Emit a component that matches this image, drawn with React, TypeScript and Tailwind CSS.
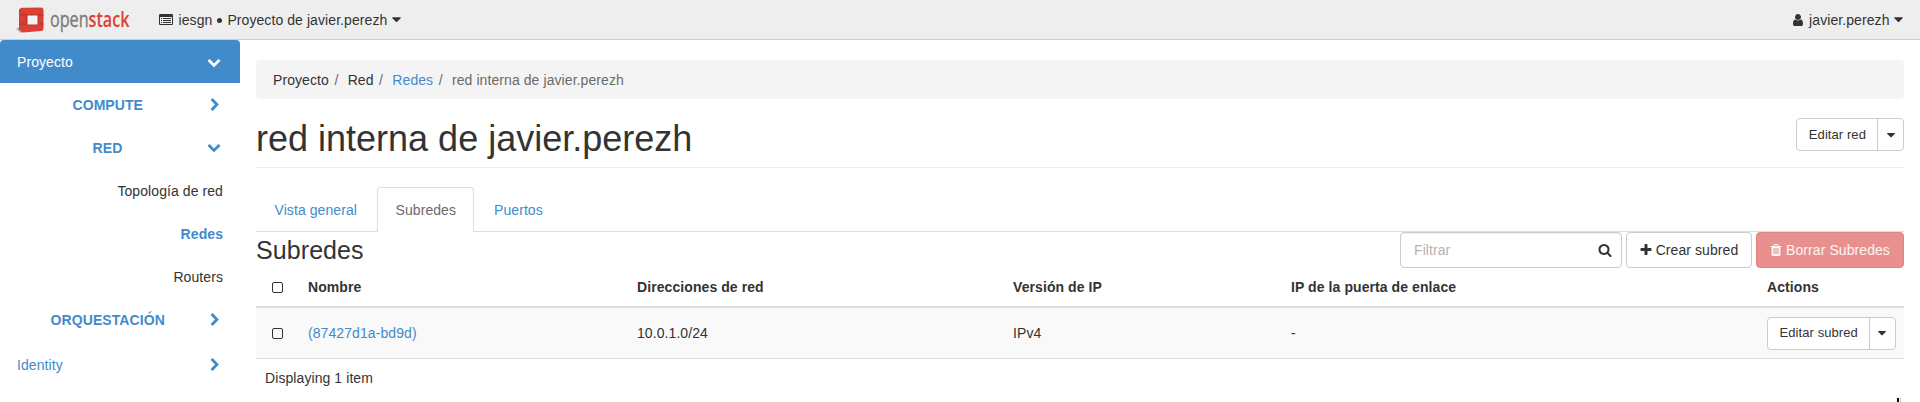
import React from "react";

const ICONS = {
  chevronDown:
    "M1683 808l-742 741q-19 19-45 19t-45-19l-742-741q-19-19-19-45.5t19-45.5l166-165q19-19 45-19t45 19l531 531 531-531q19-19 45-19t45 19l166 165q19 19 19 45.5t-19 45.5z",
  chevronRight:
    "M1363 877l-742 742q-19 19-45 19t-45-19l-166-166q-19-19-19-45t19-45l531-531-531-531q-19-19-19-45t19-45l166-166q19-19 45-19t45 19l742 742q19 19 19 45t-19 45z",
  listAlt:
    "M384 1184v64q0 13-9.5 22.5t-22.5 9.5h-64q-13 0-22.5-9.5t-9.5-22.5v-64q0-13 9.5-22.5t22.5-9.5h64q13 0 22.5 9.5t9.5 22.5zm0-256v64q0 13-9.5 22.5t-22.5 9.5h-64q-13 0-22.5-9.5t-9.5-22.5v-64q0-13 9.5-22.5t22.5-9.5h64q13 0 22.5 9.5t9.5 22.5zm0-256v64q0 13-9.5 22.5t-22.5 9.5h-64q-13 0-22.5-9.5t-9.5-22.5v-64q0-13 9.5-22.5t22.5-9.5h64q13 0 22.5 9.5t9.5 22.5zm1152 512v64q0 13-9.5 22.5t-22.5 9.5h-960q-13 0-22.5-9.5t-9.5-22.5v-64q0-13 9.5-22.5t22.5-9.5h960q13 0 22.5 9.5t9.5 22.5zm0-256v64q0 13-9.5 22.5t-22.5 9.5h-960q-13 0-22.5-9.5t-9.5-22.5v-64q0-13 9.5-22.5t22.5-9.5h960q13 0 22.5 9.5t9.5 22.5zm0-256v64q0 13-9.5 22.5t-22.5 9.5h-960q-13 0-22.5-9.5t-9.5-22.5v-64q0-13 9.5-22.5t22.5-9.5h960q13 0 22.5 9.5t9.5 22.5zm128 704v-832q0-13-9.5-22.5t-22.5-9.5h-1472q-13 0-22.5 9.5t-9.5 22.5v832q0 13 9.5 22.5t22.5 9.5h1472q13 0 22.5-9.5t9.5-22.5zm128-1088v1088q0 66-47 113t-113 47h-1472q-66 0-113-47t-47-113v-1088q0-66 47-113t113-47h1472q66 0 113 47t47 113z",
  caret:
    "M1408 704q0 26-19 45l-448 448q-19 19-45 19t-45-19l-448-448q-19-19-19-45t19-45 45-19h896q26 0 45 19t19 45z",
  user:
    "M1536 1399q0 109-62.5 187t-150.5 78h-854q-88 0-150.5-78t-62.5-187q0-85 8.5-160.5t31.5-152 58.5-131 94-89 134.5-34.5q131 128 313 128t313-128q76 0 134.5 34.5t94 89 58.5 131 31.5 152 8.500 160.5zm-256-887q0 159-112.5 271.5t-271.5 112.5-271.5-112.5-112.5-271.5 112.5-271.5 271.5-112.5 271.5 112.5 112.5 271.5z",
  search:
    "M1216 832q0-185-131.5-316.5t-316.5-131.5-316.5 131.5-131.5 316.5 131.5 316.5 316.5 131.5 316.5-131.5 131.5-316.5zm512 832q0 52-38 90t-90 38q-54 0-90-38l-343-342q-179 124-399 124-143 0-273.5-55.5t-225-150-150-225-55.5-273.5 55.5-273.5 150-225 225-150 273.5-55.5 273.5 55.5 225 150 150 225 55.5 273.5q0 220-124 399l343 343q37 37 37 90z",
  plus:
    "M1600 736v192q0 40-28 68t-68 28h-416v416q0 40-28 68t-68 28h-192q-40 0-68-28t-28-68v-416h-416q-40 0-68-28t-28-68v-192q0-40 28-68t68-28h416v-416q0-40 28-68t68-28h192q40 0 68 28t28 68v416h416q40 0 68 28t28 68z",
  trash:
    "M704 1376v-704q0-14-9-23t-23-9h-64q-14 0-23 9t-9 23v704q0 14 9 23t23 9h64q14 0 23-9t9-23zm256 0v-704q0-14-9-23t-23-9h-64q-14 0-23 9t-9 23v704q0 14 9 23t23 9h64q14 0 23-9t9-23zm256 0v-704q0-14-9-23t-23-9h-64q-14 0-23 9t-9 23v704q0 14 9 23t23 9h64q14 0 23-9t9-23zm-544-992h448l-48-117q-7-9-17-11h-317q-10 2-17 11zm928 32v64q0 14-9 23t-23 9h-96v948q0 83-47 143.5t-113 60.5h-832q-66 0-113-58.5t-47-141.5v-952h-96q-14 0-23-9t-9-23v-64q0-14 9-23t23-9h309l70-167q15-37 54-63t79-26h320q40 0 79 26t54 63l70 167h309q14 0 23 9t9 23z",
};

function Icon({ name, className = "size-[14px]" }: { name: keyof typeof ICONS; className?: string }) {
  return (
    <svg viewBox="0 0 1792 1792" fill="currentColor" className={`shrink-0 ${className}`} aria-hidden="true">
      <path d={ICONS[name]} />
    </svg>
  );
}

function Logo() {
  return (
    <svg width="116" height="30" viewBox="0 0 116 30" className="shrink-0 overflow-visible">
      <path d="M0 24l5 4 3-2-5-4z" fill="#b9b4b4" />
      <path d="M3 4.500l3-2v25l-3-3z" fill="#c4453d" />
      <path d="M4.500 4Q5 2.800 7 2.700L25 2.500q2.500 0 2.500 2.500V23.500q0 2.500-2.500 2.600L7.500 27.500Q5.500 27.500 5 25.500z" fill="#dc4034" />
      <path d="M4.500 10h7M4.500 19h7M21 10h6.500M21 19h6.500" stroke="#b0322a" strokeWidth="1" />
      <path d="M10 9.500h12.500v11h-12.500z" fill="#bd362c" />
      <path d="M11.500 10.500h10V19.500h-10z" fill="#f3f3f3" />
      <text x="34" y="21.500" fontFamily="Open Sans" fontSize="21" letterSpacing="0" textLength="79.500" lengthAdjust="spacingAndGlyphs">
        <tspan fill="#7d7d7d" stroke="#7d7d7d" strokeWidth="0.400">open</tspan>
        <tspan fill="#dd4035" fontWeight="600">stack</tspan>
      </text>
    </svg>
  );
}

function GroupItem({ label, open = false }: { label: string; open?: boolean }) {
  return (
    <a className="flex h-[43px] items-center gap-2 pl-[16px] pr-[19px] font-bold text-[#428bca]">
      <span className="flex-1 text-center">{label}</span>
      <Icon name={open ? "chevronDown" : "chevronRight"} className={open ? "mb-[1px] size-[14px]" : "-mr-[0.5px] size-[14px]"} />
    </a>
  );
}

function Sidebar() {
  return (
    <nav className="w-[240px] shrink-0">
      <a className="flex h-[43px] items-center justify-between rounded-t bg-[#428bca] pl-[17px] pr-[19.5px] text-white">
        <span>Proyecto</span>
        <Icon name="chevronDown" />
      </a>
      <GroupItem label="COMPUTE" />
      <GroupItem label="RED" open />
      <a className="flex h-[43px] items-center justify-end pr-[17px]">Topología de red</a>
      <a className="flex h-[43px] items-center justify-end pr-[17px] font-bold text-[#428bca]">Redes</a>
      <a className="flex h-[43px] items-center justify-end pr-[17px]">Routers</a>
      <GroupItem label="ORQUESTACIÓN" />
      <a className="mt-[2px] flex h-[43px] items-center justify-between pl-[17px] pr-[18.5px] text-[#428bca]">
        <span>Identity</span>
        <Icon name="chevronRight" />
      </a>
    </nav>
  );
}

function SplitButton({ label }: { label: string }) {
  return (
    <div className="inline-flex h-[33px] rounded border border-[#ccc] bg-white text-[13px]">
      <button className="border-r border-[#ccc] pl-[11.5px] pr-[11px]">{label}</button>
      <button className="flex w-[25px] items-center justify-center">
        <Icon name="caret" />
      </button>
    </div>
  );
}

const GRID = "grid grid-cols-[44px_329px_376px_278px_476px_145px] items-center";

export default function App() {
  return (
    <div className="relative h-[402px] w-[1920px] overflow-hidden bg-white font-['Liberation_Sans',Arial,sans-serif] text-[14px] leading-[20px] tracking-[0.08px] text-[#333]">
      <header className="flex h-[40px] items-center border-b border-[#ccc] bg-[#eee] pl-[16px] pr-[14px]">
        <Logo />
        <div className="ml-[26.5px] flex items-center">
          <Icon name="listAlt" />
          <span className="ml-[6px]">iesgn</span>
          <span className="ml-[5px] mr-[5px] mt-[2px] size-[5px] rounded-full bg-[#333]" />
          <span>Proyecto de javier.perezh</span>
          <Icon name="caret" className="ml-[2px] size-[15px]" />
        </div>
        <div className="ml-auto flex items-center">
          <Icon name="user" />
          <span className="ml-[4px]">javier.perezh</span>
          <Icon name="caret" className="ml-[1.5px] size-[15px]" />
        </div>
      </header>

      <div className="flex">
        <Sidebar />
        <main className="flex-1 pl-[16px] pr-[16px] pt-[20px]">
          <ol className="flex h-[39px] items-center rounded bg-[#f4f4f4] pl-[17px] pt-[1px]">
            <li>Proyecto</li>
            <li className="whitespace-pre pl-[5.5px] pr-[5.3px] text-[#6b6b6b]">/ </li>
            <li>Red</li>
            <li className="whitespace-pre pl-[5.5px] pr-[5.3px] text-[#6b6b6b]">/ </li>
            <li className="text-[#428bca]">Redes</li>
            <li className="whitespace-pre pl-[5.5px] pr-[5.3px] text-[#6b6b6b]">/ </li>
            <li className="text-[#6b6b6b]">red interna de javier.perezh</li>
          </ol>

          <div className="flex h-[69px] items-start justify-between border-b border-[#eee] pt-[19px]">
            <h1 className="pt-[1px] text-[36px] leading-[40px] tracking-normal">red interna de javier.perezh</h1>
            <SplitButton label="Editar red" />
          </div>

          <div className="mt-[19px] flex h-[45px] border-b border-[#ddd]">
            <a className="mr-[2px] flex h-[45px] w-[119px] items-center border border-transparent pl-[17.5px] text-[#428bca]">Vista general</a>
            <a className="mr-[2px] flex h-[45px] w-[97px] items-center rounded-t border border-b-0 border-[#ddd] bg-white pl-[17.5px] text-[#6b6b6b]">Subredes</a>
            <a className="flex h-[45px] items-center border border-transparent px-[17px] text-[#428bca]">Puertos</a>
          </div>

          <div className="flex h-[36px] justify-between">
            <h3 className="pt-[5px] text-[25px] leading-[26px]">Subredes</h3>
            <div className="flex gap-[4px]">
              <div className="flex h-[36px] w-[222px] items-center justify-between rounded border border-[#ccc] bg-white pl-[13px] pr-[9.5px] shadow-[inset_0_1px_1px_rgba(0,0,0,0.075)]">
                <span className="text-[#b3b3b3]">Filtrar</span>
                <Icon name="search" />
              </div>
              <button className="flex h-[36px] w-[126px] items-center justify-center gap-[3px] rounded border border-[#ccc] bg-white pr-[1px]">
                <Icon name="plus" />
                Crear subred
              </button>
              <button className="flex h-[36px] w-[148px] items-center justify-center gap-[3px] rounded border border-[#e38380] bg-[#e8908d] pr-[1px] text-white/90">
                <Icon name="trash" />
                Borrar Subredes
              </button>
            </div>
          </div>

          <div>
            <div className={`${GRID} h-[40px] border-b-2 border-[#ddd] font-bold`}>
              <span className="ml-[16px] size-[11px] rounded-[2px] border border-[#333]" />
              <span className="pl-[8px]">Nombre</span>
              <span className="pl-[8px]">Direcciones de red</span>
              <span className="pl-[8px]">Versión de IP</span>
              <span className="pl-[8px]">IP de la puerta de enlace</span>
              <span className="pl-[8px]">Actions</span>
            </div>
            <div className={`${GRID} h-[51px] border-b border-[#ddd] bg-[#f9f9f9]`}>
              <span className="ml-[16px] size-[11px] rounded-[2px] border border-[#333]" />
              <span className="pl-[8px] text-[#428bca]">(87427d1a-bd9d)</span>
              <span className="pl-[8px]">10.0.1.0/24</span>
              <span className="pl-[8px]">IPv4</span>
              <span className="pl-[8px]">-</span>
              <span className="flex pl-[8px]">
                <SplitButton label="Editar subred" />
              </span>
            </div>
            <div className="pl-[9px] pt-[9px]">Displaying 1 item</div>
          </div>
        </main>
      </div>
      <div className="absolute bottom-0 left-[1897px] flex h-[4px] gap-[1px]">
        <div className="w-[2px] bg-black" />
        <div className="w-[1px] bg-[#bbb]" />
      </div>
    </div>
  );
}
